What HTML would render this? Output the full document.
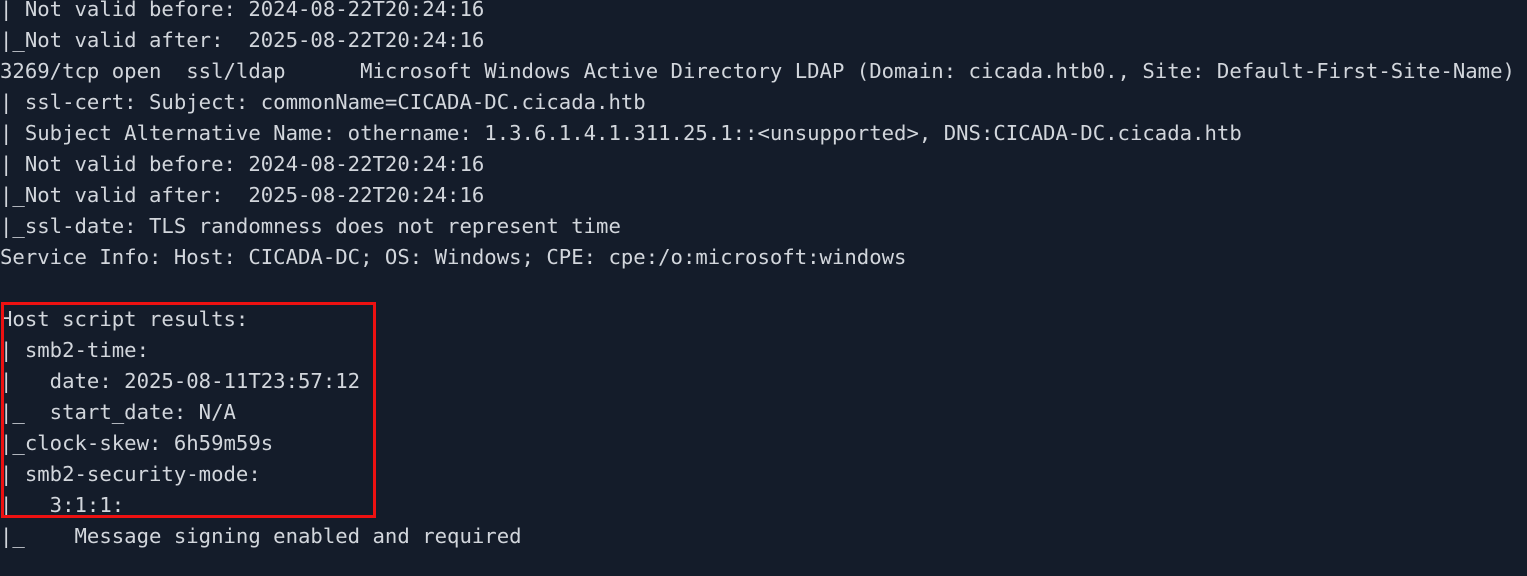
<!DOCTYPE html>
<html><head><style>
html,body{margin:0;padding:0;background:#141c2a;width:1527px;height:576px;overflow:hidden}
pre{position:absolute;left:0;top:-6px;margin:0;font-family:"DejaVu Sans Mono","Liberation Mono",monospace;font-size:20.63px;line-height:31px;color:#d2d6dc;white-space:pre}
.box{position:absolute;left:1px;top:302px;width:369px;height:210px;border:3px solid #ee1111}
</style></head><body>
<pre>| Not valid before: 2024-08-22T20:24:16
|_Not valid after:  2025-08-22T20:24:16
3269/tcp open  ssl/ldap      Microsoft Windows Active Directory LDAP (Domain: cicada.htb0., Site: Default-First-Site-Name)
| ssl-cert: Subject: commonName=CICADA-DC.cicada.htb
| Subject Alternative Name: othername: 1.3.6.1.4.1.311.25.1::&lt;unsupported&gt;, DNS:CICADA-DC.cicada.htb
| Not valid before: 2024-08-22T20:24:16
|_Not valid after:  2025-08-22T20:24:16
|_ssl-date: TLS randomness does not represent time
Service Info: Host: CICADA-DC; OS: Windows; CPE: cpe:/o:microsoft:windows

Host script results:
| smb2-time:
|   date: 2025-08-11T23:57:12
|_  start_date: N/A
|_clock-skew: 6h59m59s
| smb2-security-mode:
|   3:1:1:
|_    Message signing enabled and required</pre>
<div class="box"></div>
</body></html>
